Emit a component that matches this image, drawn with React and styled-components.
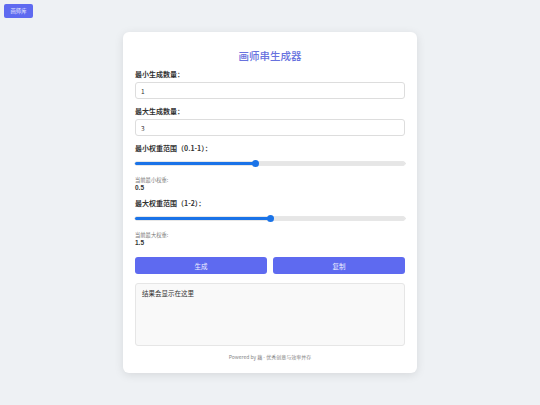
import React, { useState } from "react";
import styled, { createGlobalStyle } from "styled-components";

const GlobalStyle = createGlobalStyle`
  html, body {
    margin: 0;
    padding: 0;
    background: #eef1f4;
    font-family: "Noto Sans CJK SC", "Noto Sans", "Liberation Sans", sans-serif;
    color: #333;
  }
  * { box-sizing: border-box; }
`;

const Page = styled.div`
  width: 540px;
  height: 405px;
  position: relative;
  display: flex;
  justify-content: center;
  padding-top: 32px;
`;

const CornerButton = styled.button`
  position: absolute;
  top: 4px;
  left: 4px;
  width: 29px;
  height: 14px;
  padding: 0;
  border: none;
  border-radius: 2px;
  background: #5e6af0;
  color: #eef0ff;
  font-family: inherit;
  font-size: 5.3px;
  cursor: pointer;
`;

const Card = styled.div`
  width: 294px;
  height: 341px;
  background: #fff;
  border-radius: 6px;
  box-shadow: 0 2px 10px rgba(0, 0, 0, 0.1);
  padding: 14px 12px 10px;
  display: flex;
  flex-direction: column;
`;

const Title = styled.h1`
  margin: 0 0 3px;
  text-align: center;
  font-size: 10.5px;
  font-weight: 500;
  line-height: 20px;
  color: #6872de;
`;

const Field = styled.div`
  display: flex;
  flex-direction: column;
  margin-bottom: ${(p) => p.$gap || 7}px;
`;

const Label = styled.label`
  font-size: 7px;
  font-weight: 700;
  line-height: 10px;
  height: 10px;
  color: #333;
  margin-bottom: 3px;
`;

const Input = styled.input`
  height: 17px;
  border: 1px solid #ddd;
  border-radius: 3px;
  padding: 0 5px;
  font-family: inherit;
  font-size: 6.5px;
  color: #333;
  outline: none;
`;

const Range = styled.input.attrs({ type: "range" })`
  -webkit-appearance: none;
  appearance: none;
  display: block;
  width: 100%;
  height: 3px;
  margin: 6px 0 11px;
  border: none;
  border-radius: 2px;
  box-shadow: 0 0 0 0.5px #d0d0d0;
  outline: none;
  &::-webkit-slider-thumb {
    -webkit-appearance: none;
    width: 7px;
    height: 7px;
    border-radius: 50%;
    background: #1a73e8;
    cursor: pointer;
  }
`;

const Hint = styled.div`
  font-size: 5.3px;
  line-height: 8px;
  height: 8px;
  color: #777;
`;

const Value = styled.div`
  font-family: "Liberation Sans", Arial, sans-serif;
  font-size: 6.5px;
  font-weight: 700;
  line-height: 8px;
  height: 8px;
  color: #333;
`;

const ButtonRow = styled.div`
  display: grid;
  grid-template-columns: 1fr 1fr;
  gap: 6px;
  margin-top: 3px;
  margin-bottom: 9px;
`;

const ActionButton = styled.button`
  height: 17px;
  border: none;
  border-radius: 3px;
  background: #5e6af0;
  color: #eef0ff;
  font-family: inherit;
  font-size: 6.5px;
  cursor: pointer;
`;

const Result = styled.div`
  height: 63px;
  background: #f9f9f9;
  border: 1px solid #e6e6e6;
  border-radius: 3px;
  padding: 5px 6px;
  font-size: 6.5px;
  line-height: 9px;
  color: #333;
`;

const Footer = styled.div`
  margin-top: 7px;
  line-height: 7px;
  text-align: center;
  font-size: 5px;
  color: #888;
`;

const trackFill = (v, lo, hi) => {
  const p = ((v - lo) / (hi - lo)) * 100;
  return `linear-gradient(to right, #1a73e8 0%, #1a73e8 ${p}%, #e6e6e6 ${p}%, #e6e6e6 100%)`;
};

export default function App() {
  const [minCount, setMinCount] = useState("1");
  const [maxCount, setMaxCount] = useState("3");
  const [minW, setMinW] = useState(0.5);
  const [maxW, setMaxW] = useState(1.5);

  return (
    <>
      <GlobalStyle />
      <Page>
        <CornerButton>画师库</CornerButton>
        <Card>
          <Title>画师串生成器</Title>
          <Field>
            <Label>最小生成数量：</Label>
            <Input value={minCount} onChange={(e) => setMinCount(e.target.value)} />
          </Field>
          <Field>
            <Label>最大生成数量：</Label>
            <Input value={maxCount} onChange={(e) => setMaxCount(e.target.value)} />
          </Field>
          <Field $gap={6}>
            <Label>最小权重范围（0.1-1）：</Label>
            <Range
              min={0.1}
              max={1}
              step={0.1}
              value={minW}
              onChange={(e) => setMinW(parseFloat(e.target.value))}
              style={{ background: trackFill(minW, 0.1, 1) }}
            />
            <Hint>当前最小权重:</Hint>
            <Value>{minW}</Value>
          </Field>
          <Field $gap={7}>
            <Label>最大权重范围（1-2）：</Label>
            <Range
              min={1}
              max={2}
              step={0.1}
              value={maxW}
              onChange={(e) => setMaxW(parseFloat(e.target.value))}
              style={{ background: trackFill(maxW, 1, 2) }}
            />
            <Hint>当前最大权重:</Hint>
            <Value>{maxW}</Value>
          </Field>
          <ButtonRow>
            <ActionButton>生成</ActionButton>
            <ActionButton>复制</ActionButton>
          </ButtonRow>
          <Result>结果会显示在这里</Result>
          <Footer>Powered by 藕 - 优秀创意与效率并存</Footer>
        </Card>
      </Page>
    </>
  );
}
